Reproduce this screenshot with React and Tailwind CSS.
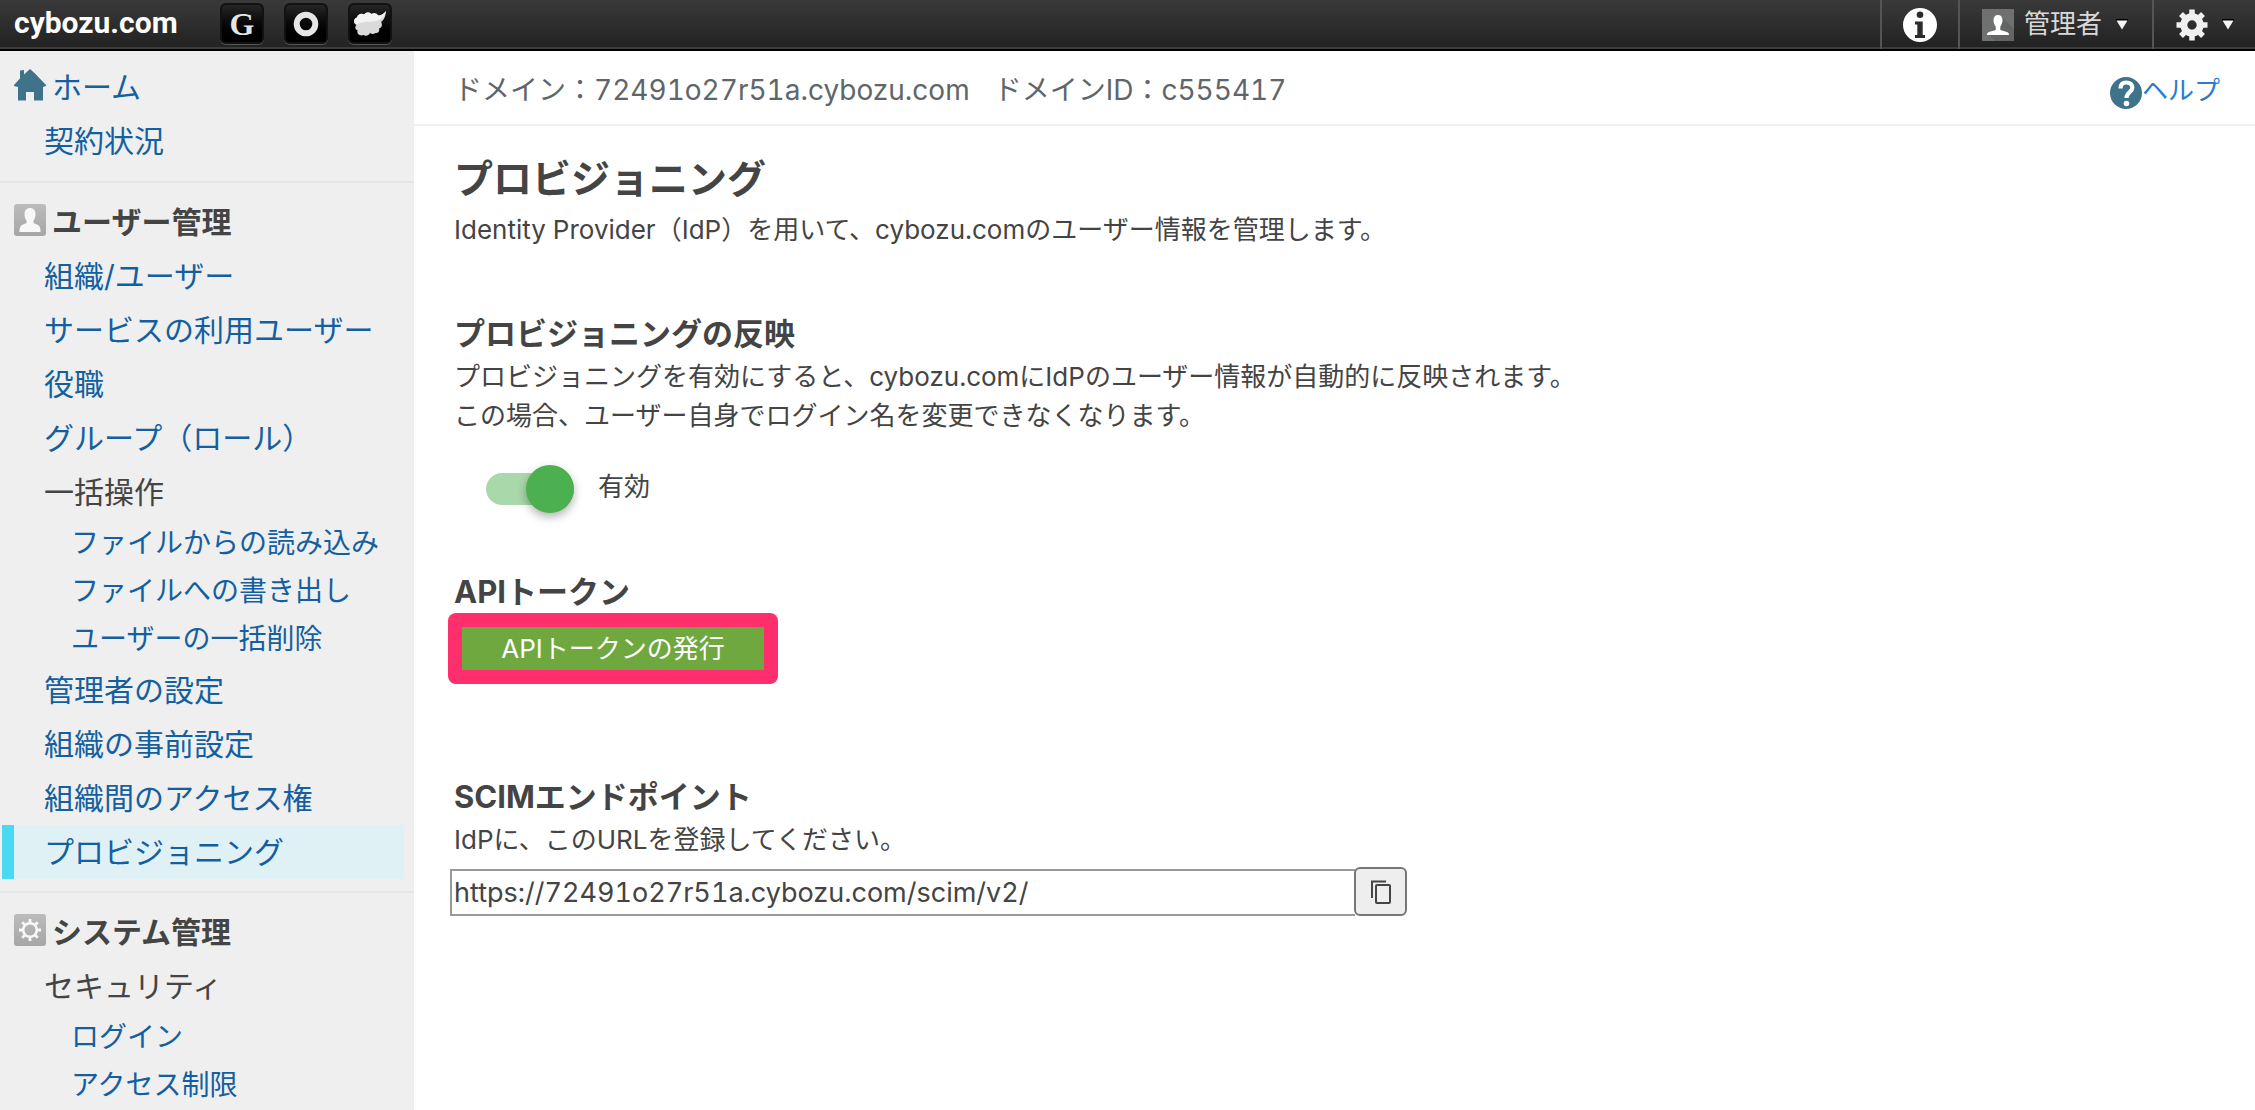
import React, { useState } from "react";

const userLinks = [
  { label: "組織/ユーザー" },
  { label: "サービスの利用ユーザー" },
  { label: "役職" },
  { label: "グループ（ロール）" },
  {
    label: "一括操作",
    children: ["ファイルからの読み込み", "ファイルへの書き出し", "ユーザーの一括削除"],
  },
  { label: "管理者の設定" },
  { label: "組織の事前設定" },
  { label: "組織間のアクセス権" },
  { label: "プロビジョニング", active: true },
];

const systemLinks = [
  { label: "セキュリティ", children: ["ログイン", "アクセス制限"] },
];

const HomeIcon = () => (
  <svg viewBox="0 0 32 32" className="w-8 h-8 mb-1 shrink-0" fill="#3f738a">
    <path d="M16 0 L21 4.5 L32 16 V17 L29 18 V31.500 H20 V23 H12 V31.500 H4 V18 L0 17 V16 L6 9.500 V1.500 L10 1 V5.500 Z" />
  </svg>
);

const UserIcon = () => (
  <svg viewBox="0 0 32 32" className="w-8 h-8 mb-1 shrink-0">
    <defs>
      <linearGradient id="userBg" x1="0" y1="0" x2="0" y2="1">
        <stop offset="0" stopColor="#bcbcbc" />
        <stop offset="1" stopColor="#a6a6a6" />
      </linearGradient>
    </defs>
    <rect width="32" height="32" rx="3" fill="url(#userBg)" />
    <path
      d="M16 4 C19.500 4 21.500 6.500 21.500 10 C21.500 13 20.500 15.500 19.500 16.500 V19 L24 21 C26 22 26.500 24 26.500 28 H5.500 C5.500 24 6 22 8 21 L12.500 19 V16.500 C11.500 15.500 10.500 13 10.500 10 C10.500 6.500 12.500 4 16 4 Z"
      fill="#f8f8f8"
    />
  </svg>
);

const SystemIcon = () => (
  <svg viewBox="0 0 32 32" className="w-8 h-8 mb-1 shrink-0">
    <rect width="32" height="32" rx="3" fill="url(#userBg)" />
    <circle cx="16" cy="16" r="6.800" fill="none" stroke="#f8f8f8" strokeWidth="2.600" />
    <path
      d="M16 5 V9 M16 23 V27 M5 16 H9 M23 16 H27 M8.200 8.200 L11 11 M21 21 L23.800 23.800 M23.800 8.200 L21 11 M11 21 L8.200 23.800"
      stroke="#f8f8f8"
      strokeWidth="2.800"
    />
  </svg>
);

const InfoIcon = () => (
  <svg viewBox="0 0 34 34" className="w-[34px] h-[34px]">
    <circle cx="17" cy="17" r="17" fill="#fff" />
    <circle cx="17" cy="6.800" r="3.300" fill="#2c2c2c" />
    <path d="M12 13.500 H19.700 V27 H22 V30 H12 V27 H14.300 V16.500 H12 Z" fill="#2c2c2c" />
  </svg>
);

const AvatarIcon = () => (
  <svg viewBox="0 0 32 32" className="w-8 h-8">
    <rect width="32" height="32" fill="#6f7170" />
    <path d="M20 8 L32 20 V32 H13 L7 26 Z" fill="#636564" />
    <path
      d="M16 6 C19 6 20.500 8 20.500 11 C20.500 14 19.500 16 18.300 17.500 V21 L25 23 C26.500 23.600 27 24.500 27 26 H5 C5 24.500 5.500 23.600 7 23 L13.700 21 V17.500 C12.500 16 11.500 14 11.500 11 C11.500 8 13 6 16 6 Z"
      fill="#fff"
    />
  </svg>
);

const GearIcon = () => (
  <svg viewBox="0 0 32 32" className="w-8 h-8">
    <circle cx="16" cy="16" r="8.200" fill="none" stroke="#f0f0f0" strokeWidth="7" />
    <path
      d="M16 0.500 V6 M16 26 V31.500 M0.500 16 H6 M26 16 H31.500 M5 5 L9 9 M23 23 L27 27 M27 5 L23 9 M9 23 L5 27"
      stroke="#f0f0f0"
      strokeWidth="5.500"
    />
  </svg>
);

const Caret = () => (
  <svg viewBox="0 0 12 11" className="w-3 h-[11px]">
    <path d="M0 0 H12 V2 H0 Z" fill="#000" />
    <path d="M0.500 1.500 H11.500 L6 10.500 Z" fill="#f5f5f5" />
  </svg>
);

const HelpIcon = () => (
  <svg viewBox="0 0 32 32" className="w-8 h-8 mt-1">
    <circle cx="16" cy="16" r="16" fill="#3f738a" />
    <path
      d="M10.500 11.500 C10.500 7.500 12.500 5.500 16.200 5.500 C20 5.500 22.300 7.600 22.300 10.700 C22.300 15 16.500 15.200 16.500 21"
      fill="none"
      stroke="#fff"
      strokeWidth="4.200"
    />
    <circle cx="16.500" cy="26.500" r="2.800" fill="#fff" />
  </svg>
);

const CopyIcon = () => (
  <svg viewBox="0 0 22 26" className="w-[22px] h-[26px]" fill="none" stroke="#444" strokeWidth="2">
    <path d="M2 19 V2.500 H16" />
    <rect x="6" y="6" width="14" height="18" rx="1" />
  </svg>
);

const AppButton = ({ label, children }) => (
  <button
    aria-label={label}
    className="w-11 h-[41px] rounded-md border-2 border-[#111] bg-linear-to-b from-[#262626] to-black flex items-center justify-center shadow-[0_1px_0_#555]"
  >
    {children}
  </button>
);

const NavList = ({ items }) => (
  <ul>
    {items.map((item) => (
      <li key={item.label}>
        {item.children ? (
          <>
            <span className="block pl-11 leading-[54px] text-[#444]">{item.label}</span>
            <ul className="text-[28px]">
              {item.children.map((child) => (
                <li key={child}>
                  <a href="#" className="block pl-[71px] leading-[48px]">
                    {child}
                  </a>
                </li>
              ))}
            </ul>
          </>
        ) : item.active ? (
          <a
            href="#"
            className="block ml-0.5 mr-2.5 pl-[30px] leading-[54px] bg-[#dff1f5] border-l-12 border-[#4ad9f3]"
          >
            {item.label}
          </a>
        ) : (
          <a href="#" className="block pl-11 leading-[54px]">
            {item.label}
          </a>
        )}
      </li>
    ))}
  </ul>
);

const TopBar = () => (
  <header className="h-[51px] flex justify-between bg-linear-to-b from-[#3a3a3a] to-[#212121] border-b-2 border-black shadow-[inset_0_-2px_0_#3d3d3d]">
    <div className="flex items-start pl-3.5">
      <a href="#" className="w-[206px] font-['Roboto',sans-serif] font-bold text-[30px] leading-[46px] text-white">
        cybozu.com
      </a>
      <div className="flex gap-5 pt-[3px]">
        <AppButton label="Garoon">
          <span className="font-['Liberation_Serif',serif] font-bold text-[32px] leading-8 text-[#e4e4e4]">G</span>
        </AppButton>
        <AppButton label="Office">
          <svg viewBox="0 0 26 26" className="w-[26px] h-[26px]">
            <circle cx="13" cy="13" r="9.300" fill="none" stroke="#e6e6e6" strokeWidth="6" />
          </svg>
        </AppButton>
        <AppButton label="kintone">
          <svg viewBox="0 0 34 26" className="w-[34px] h-[26px]">
            <path
              d="M33 0 C32.500 5 31.500 8.500 28 11 C30 14 28.500 17 26 17.500 C27 20 25 22.500 22.500 22 C20 24 18 22.500 17 22 C16 24.500 12.500 25.500 10.500 24 C7 25.500 3.500 23 4.500 19 C1.500 18.500 2 15 3.500 14 C0 12 0.500 7.500 4 6.500 C5 2.500 9 2 11 3.500 C13 0.500 17 1 18.500 3 C21 1.500 24 2.500 25 4.500 C28.500 4.500 31 2.500 33 0 Z"
              fill="#dadada"
            />
            <path
              d="M33 0 C32 5 28 10 20 10.500 C12 11 8 11 3.500 13.500 C0 12 0.500 7.500 4 6.500 C5 2.500 9 2 11 3.500 C13 0.500 17 1 18.500 3 C21 1.500 24 2.500 25 4.500 C28.500 4.500 31 2.500 33 0 Z"
              fill="#f2f2f2"
            />
          </svg>
        </AppButton>
      </div>
    </div>

    <div className="flex text-[26px] text-[#d9d9d9]">
      <button aria-label="お知らせ" className="w-[78px] flex items-center justify-center border-l-2 border-[#555]">
        <InfoIcon />
      </button>
      <button className="w-[194px] flex items-center border-l-2 border-[#555] pl-[22px]">
        <AvatarIcon />
        <span className="ml-2.5 mr-3.5 mb-0.5 leading-10">管理者</span>
        <Caret />
      </button>
      <button aria-label="設定" className="w-[103px] flex items-center border-l-2 border-[#555] pl-[22px] gap-3.5">
        <GearIcon />
        <Caret />
      </button>
    </div>
  </header>
);

const Sidebar = () => (
  <nav className="w-[414px] shrink-0 bg-[#efefef] text-[30px] text-[#145f9f]">
    <div className="pt-[9px] pb-[13px]">
      <a href="#" className="flex items-center gap-1.5 pl-3.5 leading-[54px]">
        <HomeIcon />
        ホーム
      </a>
      <a href="#" className="block pl-11 leading-[54px]">
        契約状況
      </a>
    </div>

    <div className="border-t-2 border-[#e6e6e6] pt-3 pb-3">
      <h2 className="flex items-center gap-1.5 pl-3.5 leading-[54px] font-bold text-[#444]">
        <UserIcon />
        ユーザー管理
      </h2>
      <NavList items={userLinks} />
    </div>

    <div className="border-t-2 border-[#e6e6e6] pt-3">
      <h2 className="flex items-center gap-1.5 pl-3.5 leading-[54px] font-bold text-[#444]">
        <SystemIcon />
        システム管理
      </h2>
      <NavList items={systemLinks} />
    </div>
  </nav>
);

const App = () => {
  const [enabled, setEnabled] = useState(true);

  return (
    <div className="min-h-screen flex flex-col bg-white font-['Inter','Noto_Sans_CJK_JP',sans-serif] text-[#444] tabular-nums">
      <TopBar />

      <div className="flex flex-1">
        <Sidebar />

        <main className="flex-1 text-[26px] leading-[39px]">
          {/* Domain bar */}
          <div className="h-[75px] flex items-center justify-between border-b-2 border-[#f0f0f0] pt-1.5 pl-10 pr-[35px]">
            <div className="flex gap-6 text-[28px] text-[#5f666b]">
              <span>ドメイン：72491o27r51a.cybozu.com</span>
              <span>ドメインID：c555417</span>
            </div>
            <a href="#" className="flex items-center text-[#2b7bd0]">
              <HelpIcon />
              ヘルプ
            </a>
          </div>

          <div className="pl-10 pt-6">
            <h1 className="text-[39px] leading-[58px] font-bold">プロビジョニング</h1>
            <p className="mt-0.5">Identity Provider（IdP）を用いて、cybozu.comのユーザー情報を管理します。</p>

            {/* Provisioning switch */}
            <h2 className="mt-16 text-[31px] leading-[42px] font-bold">プロビジョニングの反映</h2>
            <p className="mt-0.5">
              プロビジョニングを有効にすると、cybozu.comにIdPのユーザー情報が自動的に反映されます。
              <br />
              この場合、ユーザー自身でログイン名を変更できなくなります。
            </p>
            <label className="mt-[30px] ml-8 w-fit h-12 flex items-center gap-6">
              <input
                type="checkbox"
                role="switch"
                checked={enabled}
                onChange={(e) => setEnabled(e.target.checked)}
                className="peer sr-only"
              />
              <span className="w-[88px] h-8 rounded-full bg-gray-300 flex items-center peer-checked:bg-[#a9d8ab] peer-checked:justify-end">
                <span className="w-12 h-12 rounded-full bg-[#4caf50] shadow-[0_4px_10px_rgba(0,0,0,0.3)]" />
              </span>
              <span className="mb-1.5">有効</span>
            </label>

            {/* Token */}
            <h2 className="mt-[58px] text-[31px] leading-[42px] font-bold">APIトークン</h2>
            <div className="-ml-1.5 w-fit rounded-lg bg-[#ff2f6d] p-3.5">
              <button className="block w-[302px] h-[43px] bg-[#6fa83f] text-white">APIトークンの発行</button>
            </div>

            {/* Endpoint */}
            <h2 className="mt-[92px] text-[31px] leading-[42px] font-bold">SCIMエンドポイント</h2>
            <p className="mt-0.5">
              <label htmlFor="endpoint">IdPに、このURLを登録してください。</label>
            </p>
            <div className="mt-2 -ml-1 flex items-end">
              <input
                id="endpoint"
                type="text"
                readOnly
                value="https://72491o27r51a.cybozu.com/scim/v2/"
                className="w-[905px] h-[47px] border-2 border-r-0 border-[#999] px-0.5 text-[27px]"
              />
              <button
                aria-label="コピー"
                className="w-[53px] h-[49px] -ml-px rounded-md border-2 border-[#767676] bg-[#eee] flex items-center justify-center"
              >
                <CopyIcon />
              </button>
            </div>
          </div>
        </main>
      </div>
    </div>
  );
};

export default App;
